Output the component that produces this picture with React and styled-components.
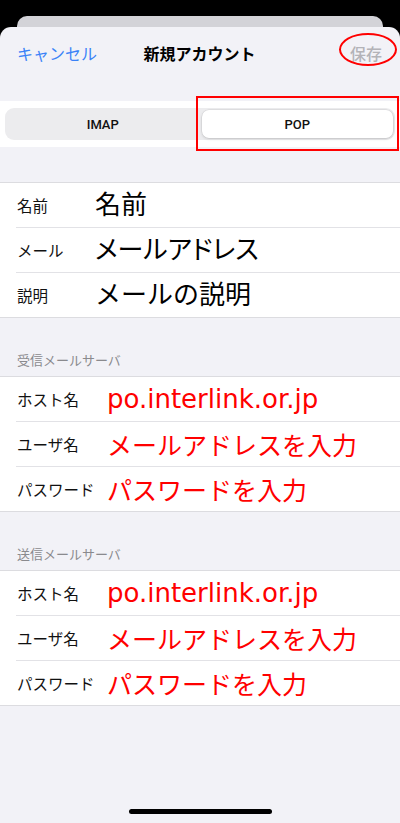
import React from 'react';
import styled, { createGlobalStyle } from 'styled-components';

const GlobalStyle = createGlobalStyle`
  html, body {
    margin: 0;
    padding: 0;
    background: #000;
  }
  body {
    font-family: "Liberation Sans", "Noto Sans CJK JP", sans-serif;
    -webkit-font-smoothing: antialiased;
  }
`;

const Screen = styled.div`
  width: 400px;
  height: 823px;
  background: #000;
  display: flex;
  flex-direction: column;
  overflow: hidden;
`;

const BackCard = styled.div`
  flex: none;
  height: 11px;
  margin: 16px 17px 0;
  background: #d3d3d8;
  border-radius: 10px 10px 0 0;
`;

const Sheet = styled.div`
  flex: 1;
  background: #f2f2f7;
  border-radius: 11px 11px 0 0;
  display: flex;
  flex-direction: column;
`;

const NavBar = styled.header`
  flex: none;
  height: 54px;
  display: grid;
  grid-template-columns: 1fr auto 1fr;
  align-items: center;
  padding: 1px 18px 0 17px;
  box-sizing: border-box;
  margin-bottom: 20px;
  font-size: 16px;
  line-height: 20px;
`;

const Cancel = styled.span`
  color: #3a82f7;
  justify-self: start;
`;

const Title = styled.h1`
  margin: 0;
  font-size: 16px;
  font-weight: 700;
  color: #000;
`;

const Save = styled.span`
  position: relative;
  justify-self: end;
  color: #b3b3b8;
  font-weight: 500;
`;

const RedEllipse = styled.span`
  position: absolute;
  left: -11px;
  top: -12px;
  width: 58px;
  height: 33px;
  box-sizing: border-box;
  border: 2px solid #ff0000;
  border-radius: 50%;
`;

const SegmentBand = styled.div`
  flex: none;
  background: #fff;
  padding: 7px 5px;
  margin-bottom: 35px;
`;

const SegmentControl = styled.div`
  height: 32px;
  box-sizing: border-box;
  padding: 2px;
  display: grid;
  grid-template-columns: 1fr 1fr;
  column-gap: 3px;
  background: #ececee;
  border-radius: 9px;
`;

const Segment = styled.div`
  position: relative;
  display: flex;
  align-items: center;
  justify-content: center;
  font-family: Roboto, "Liberation Sans", sans-serif;
  font-size: 13px;
  font-weight: 500;
  color: #111;
  border-radius: 7px;
  background: ${(p) => (p.$active ? '#fff' : 'transparent')};
  box-shadow: ${(p) =>
    p.$active ? '0 1px 3px rgba(0,0,0,0.14), 0 0 0 0.5px rgba(0,0,0,0.08)' : 'none'};
`;

const RedBox = styled.span`
  position: absolute;
  top: -14px;
  bottom: -13px;
  left: -6px;
  right: -6px;
  border: 2px solid #ff0000;
`;

const Group = styled.section`
  flex: none;
  background: #fff;
  border-top: 1px solid #dcdce0;
  border-bottom: 1px solid #dcdce0;
`;

const Row = styled.div`
  height: 44px;
  margin-left: 16px;
  padding-left: 1px;
  display: grid;
  grid-template-columns: ${(p) => p.$labelWidth}px 1fr;
  align-items: center;
  border-bottom: 1px solid #e2e2e6;

  &:last-child {
    border-bottom: none;
  }
`;

const Label = styled.span`
  font-size: 15.5px;
  color: #111;
  white-space: nowrap;
`;

const Value = styled.span`
  font-size: 26px;
  color: #000;
  white-space: nowrap;
  line-height: 1;
  font-feature-settings: ${(p) => (p.$proportional ? '"palt"' : 'normal')};
`;

const Annotation = styled.span`
  font-family: ${(p) =>
    p.$latin ? '"DejaVu Sans", sans-serif' : '"Noto Sans CJK JP", sans-serif'};
  font-size: ${(p) => (p.$latin ? '26px' : '25px')};
  color: #ff0000;
  white-space: nowrap;
  line-height: 1;
  margin-left: -2px;
`;

const SectionHeader = styled.div`
  flex: none;
  height: 58px;
  box-sizing: border-box;
  display: flex;
  align-items: flex-end;
  padding: 0 17px 7px;
  font-size: 13px;
  line-height: 16px;
  color: #8a8a8e;
`;

const Spacer = styled.div`
  flex: 1;
`;

const HomeBar = styled.div`
  flex: none;
  width: 143px;
  height: 5px;
  margin: 0 auto 9px;
  background: #000;
  border-radius: 3px;
`;

const accountRows = [
  { label: '名前', value: '名前' },
  { label: 'メール', value: 'メールアドレス', proportional: true },
  { label: '説明', value: 'メールの説明' },
];

const serverRows = [
  { label: 'ホスト名', value: 'po.interlink.or.jp', latin: true },
  { label: 'ユーザ名', value: 'メールアドレスを入力' },
  { label: 'パスワード', value: 'パスワードを入力' },
];

const ServerGroup = ({ title }) => (
  <>
    <SectionHeader>{title}</SectionHeader>
    <Group>
      {serverRows.map((row) => (
        <Row key={row.label} $labelWidth={92}>
          <Label>{row.label}</Label>
          <Annotation $latin={row.latin}>{row.value}</Annotation>
        </Row>
      ))}
    </Group>
  </>
);

const App = () => (
  <>
    <GlobalStyle />
    <Screen>
      <BackCard />
      <Sheet>
        <NavBar>
          <Cancel>キャンセル</Cancel>
          <Title>新規アカウント</Title>
          <Save>
            保存
            <RedEllipse />
          </Save>
        </NavBar>

        <SegmentBand>
          <SegmentControl>
            <Segment>IMAP</Segment>
            <Segment $active>
              POP
              <RedBox />
            </Segment>
          </SegmentControl>
        </SegmentBand>

        <Group>
          {accountRows.map((row) => (
            <Row key={row.label} $labelWidth={78}>
              <Label>{row.label}</Label>
              <Value $proportional={row.proportional}>{row.value}</Value>
            </Row>
          ))}
        </Group>

        <ServerGroup title="受信メールサーバ" />
        <ServerGroup title="送信メールサーバ" />

        <Spacer />
        <HomeBar />
      </Sheet>
    </Screen>
  </>
);

export default App;
